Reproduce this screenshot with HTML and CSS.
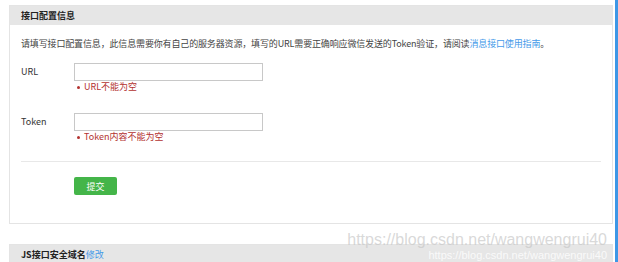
FILE: index.html
```html
<!DOCTYPE html>
<html lang="zh-CN">

<head>
  <meta charset="UTF-8">
  <meta name="viewport" content="width=device-width, initial-scale=1.0">
  <title>接口配置信息</title>
  <link rel="stylesheet" href="styles.css">
</head>

<body>
  <div class="page">
    <div class="panel">
      <div class="panel-head">接口配置信息</div>
      <div class="panel-body">
        <p class="desc">请填写接口配置信息，此信息需要你有自己的服务器资源，填写的URL需要正确响应微信发送的Token验证，请阅读<a href="#">消息接口使用指南</a>。</p>

        <div class="form-group">
          <label class="form-label" for="url">URL</label>
          <div class="form-field">
            <input class="form-input" id="url" type="text">
            <div class="form-error">URL不能为空</div>
          </div>
        </div>

        <div class="form-group">
          <label class="form-label" for="token">Token</label>
          <div class="form-field">
            <input class="form-input" id="token" type="text">
            <div class="form-error">Token内容不能为空</div>
          </div>
        </div>

        <div class="form-actions">
          <button class="btn-green" type="button">提交</button>
        </div>
      </div>
    </div>

    <div class="panel panel-next">
      <div class="panel-head">JS接口安全域名<a href="#">修改</a></div>
    </div>

    <div class="watermark">
      <span class="wm-big">https://blog.csdn.net/wangwengrui40</span>
      <span class="wm-small">https://blog.csdn.net/wangwengrui40</span>
    </div>
  </div>
  <div class="strip"></div>
</body>

</html>
```

FILE: styles.css
```css
html,
body {
  height: 100%;
}

body {
  background-color: #ffffff;
  color: #444;
  display: flex;
  font-family: "Noto Sans CJK SC", "Liberation Sans", sans-serif;
  font-size: 9px;
  margin: 0;
  overflow: hidden;
}

a {
  color: #459ae9;
  text-decoration: none;
}

.page {
  flex: 1;
  padding: 5px 2px 0 9px;
  position: relative;
}

.strip {
  background-color: #3d97e6;
  width: 3px;
}

.panel {
  border: 1px solid #e4e4e4;
}

.panel-head {
  background-color: #e6e6e6;
  color: #222;
  font-weight: bold;
  height: 19px;
  line-height: 19px;
  padding-left: 11px;
}

.panel-head a {
  font-weight: normal;
}

.panel-body {
  padding: 13px 11px 28px;
}

.desc {
  letter-spacing: -0.15px;
  line-height: 12px;
  margin: 0 0 13px;
}

.form-group {
  display: flex;
}

.form-group + .form-group {
  margin-top: 20px;
}

.form-label {
  color: #333;
  line-height: 18px;
  width: 53px;
}

.form-input {
  border: 1px solid #c8c8c8;
  box-sizing: border-box;
  display: block;
  height: 18px;
  margin: 0;
  width: 189px;
}

.form-error {
  align-items: center;
  color: #b3322f;
  display: flex;
  gap: 4px;
  line-height: 12px;
  padding-left: 3px;
}

.form-error::before {
  background-color: #b3322f;
  border-radius: 50%;
  content: "";
  height: 3px;
  width: 3px;
}

.form-actions {
  border-top: 1px solid #e8e8e8;
  margin-top: 18px;
  padding: 15px 0 0 53px;
}

.btn-green {
  background-color: #44b549;
  border: none;
  border-radius: 2px;
  color: #ffffff;
  font-family: inherit;
  font-size: 9px;
  height: 18px;
  padding: 0;
  width: 43px;
}

.panel-next {
  margin-top: 20px;
}

.watermark {
  align-items: flex-end;
  bottom: 0;
  display: flex;
  flex-direction: column;
  pointer-events: none;
  position: absolute;
  right: 8px;
}

.wm-big {
  color: rgba(200, 200, 200, 0.7);
  font-family: "Liberation Sans", sans-serif;
  font-size: 16px;
  line-height: 18px;
}

.wm-small {
  color: rgba(255, 255, 255, 0.8);
  font-family: "Liberation Sans", sans-serif;
  font-size: 11px;
  line-height: 13px;
}
```
